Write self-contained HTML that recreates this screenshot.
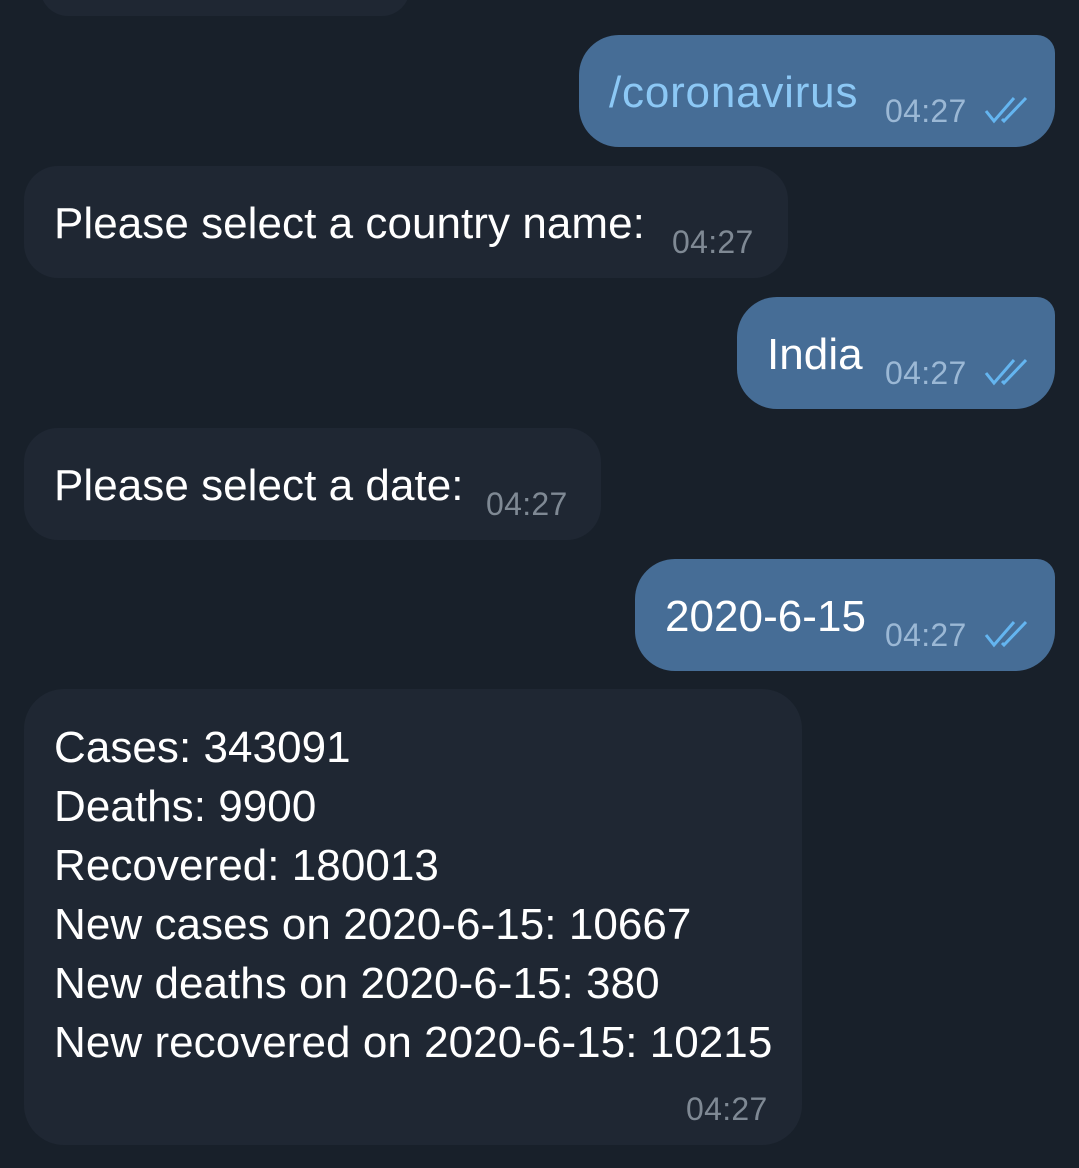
<!DOCTYPE html>
<html><head><meta charset="utf-8"><style>
html,body{margin:0;padding:0;}
body{width:1079px;height:1168px;background:#18202a;position:relative;overflow:hidden;font-family:"Liberation Sans",sans-serif;}
.b{position:absolute;}
.in{background:#1f2733;border-radius:34px;}
.out{background:#466d96;border-radius:40px 18px 40px 40px;}
.t{position:absolute;white-space:nowrap;color:#fff;font-size:44px;letter-spacing:0.05px;line-height:1;}
.tm{position:absolute;white-space:nowrap;font-size:32px;letter-spacing:0.3px;color:#7f8994;line-height:1;}
.out .tm{color:#9bb8d5;}
svg{position:absolute;}
</style></head><body>
<div class="b in" style="left:40px;top:-40px;width:370px;height:56px;"></div>

<div class="b out" style="left:579px;top:35px;width:476px;height:112px;">
<div class="t" style="left:30px;top:36px;color:#8cc8f5;letter-spacing:0.8px;">/coronavirus</div>
<div class="tm" style="left:306px;top:60px;">04:27</div>
<svg style="left:405px;top:60px" width="48" height="30" viewBox="0 0 48 30"><path d="M2 16 L10 26 L30 3 M18 24 L20 26 L42 3" fill="none" stroke="#64b5f0" stroke-width="3"/></svg>
</div>

<div class="b in" style="left:24px;top:166px;width:764px;height:112px;">
<div class="t" style="left:30px;top:36px;">Please select a country name:</div>
<div class="tm" style="left:648px;top:60px;">04:27</div>
</div>

<div class="b out" style="left:737px;top:297px;width:318px;height:112px;">
<div class="t" style="left:30px;top:36px;">India</div>
<div class="tm" style="left:148px;top:60px;">04:27</div>
<svg style="left:247px;top:60px" width="48" height="30" viewBox="0 0 48 30"><path d="M2 16 L10 26 L30 3 M18 24 L20 26 L42 3" fill="none" stroke="#64b5f0" stroke-width="3"/></svg>
</div>

<div class="b in" style="left:24px;top:428px;width:577px;height:112px;">
<div class="t" style="left:30px;top:36px;">Please select a date:</div>
<div class="tm" style="left:462px;top:60px;">04:27</div>
</div>

<div class="b out" style="left:635px;top:559px;width:420px;height:112px;">
<div class="t" style="left:30px;top:36px;">2020-6-15</div>
<div class="tm" style="left:250px;top:60px;">04:27</div>
<svg style="left:349px;top:60px" width="48" height="30" viewBox="0 0 48 30"><path d="M2 16 L10 26 L30 3 M18 24 L20 26 L42 3" fill="none" stroke="#64b5f0" stroke-width="3"/></svg>
</div>

<div class="b in" style="left:24px;top:689px;width:778px;height:456px;border-radius:40px;">
<div class="t" style="left:30px;top:37px;">Cases: 343091</div>
<div class="t" style="left:30px;top:96px;">Deaths: 9900</div>
<div class="t" style="left:30px;top:155px;">Recovered: 180013</div>
<div class="t" style="left:30px;top:214px;">New cases on 2020-6-15: 10667</div>
<div class="t" style="left:30px;top:273px;">New deaths on 2020-6-15: 380</div>
<div class="t" style="left:30px;top:332px;">New recovered on 2020-6-15: 10215</div>
<div class="tm" style="left:662px;top:404px;">04:27</div>
</div>
</body></html>
